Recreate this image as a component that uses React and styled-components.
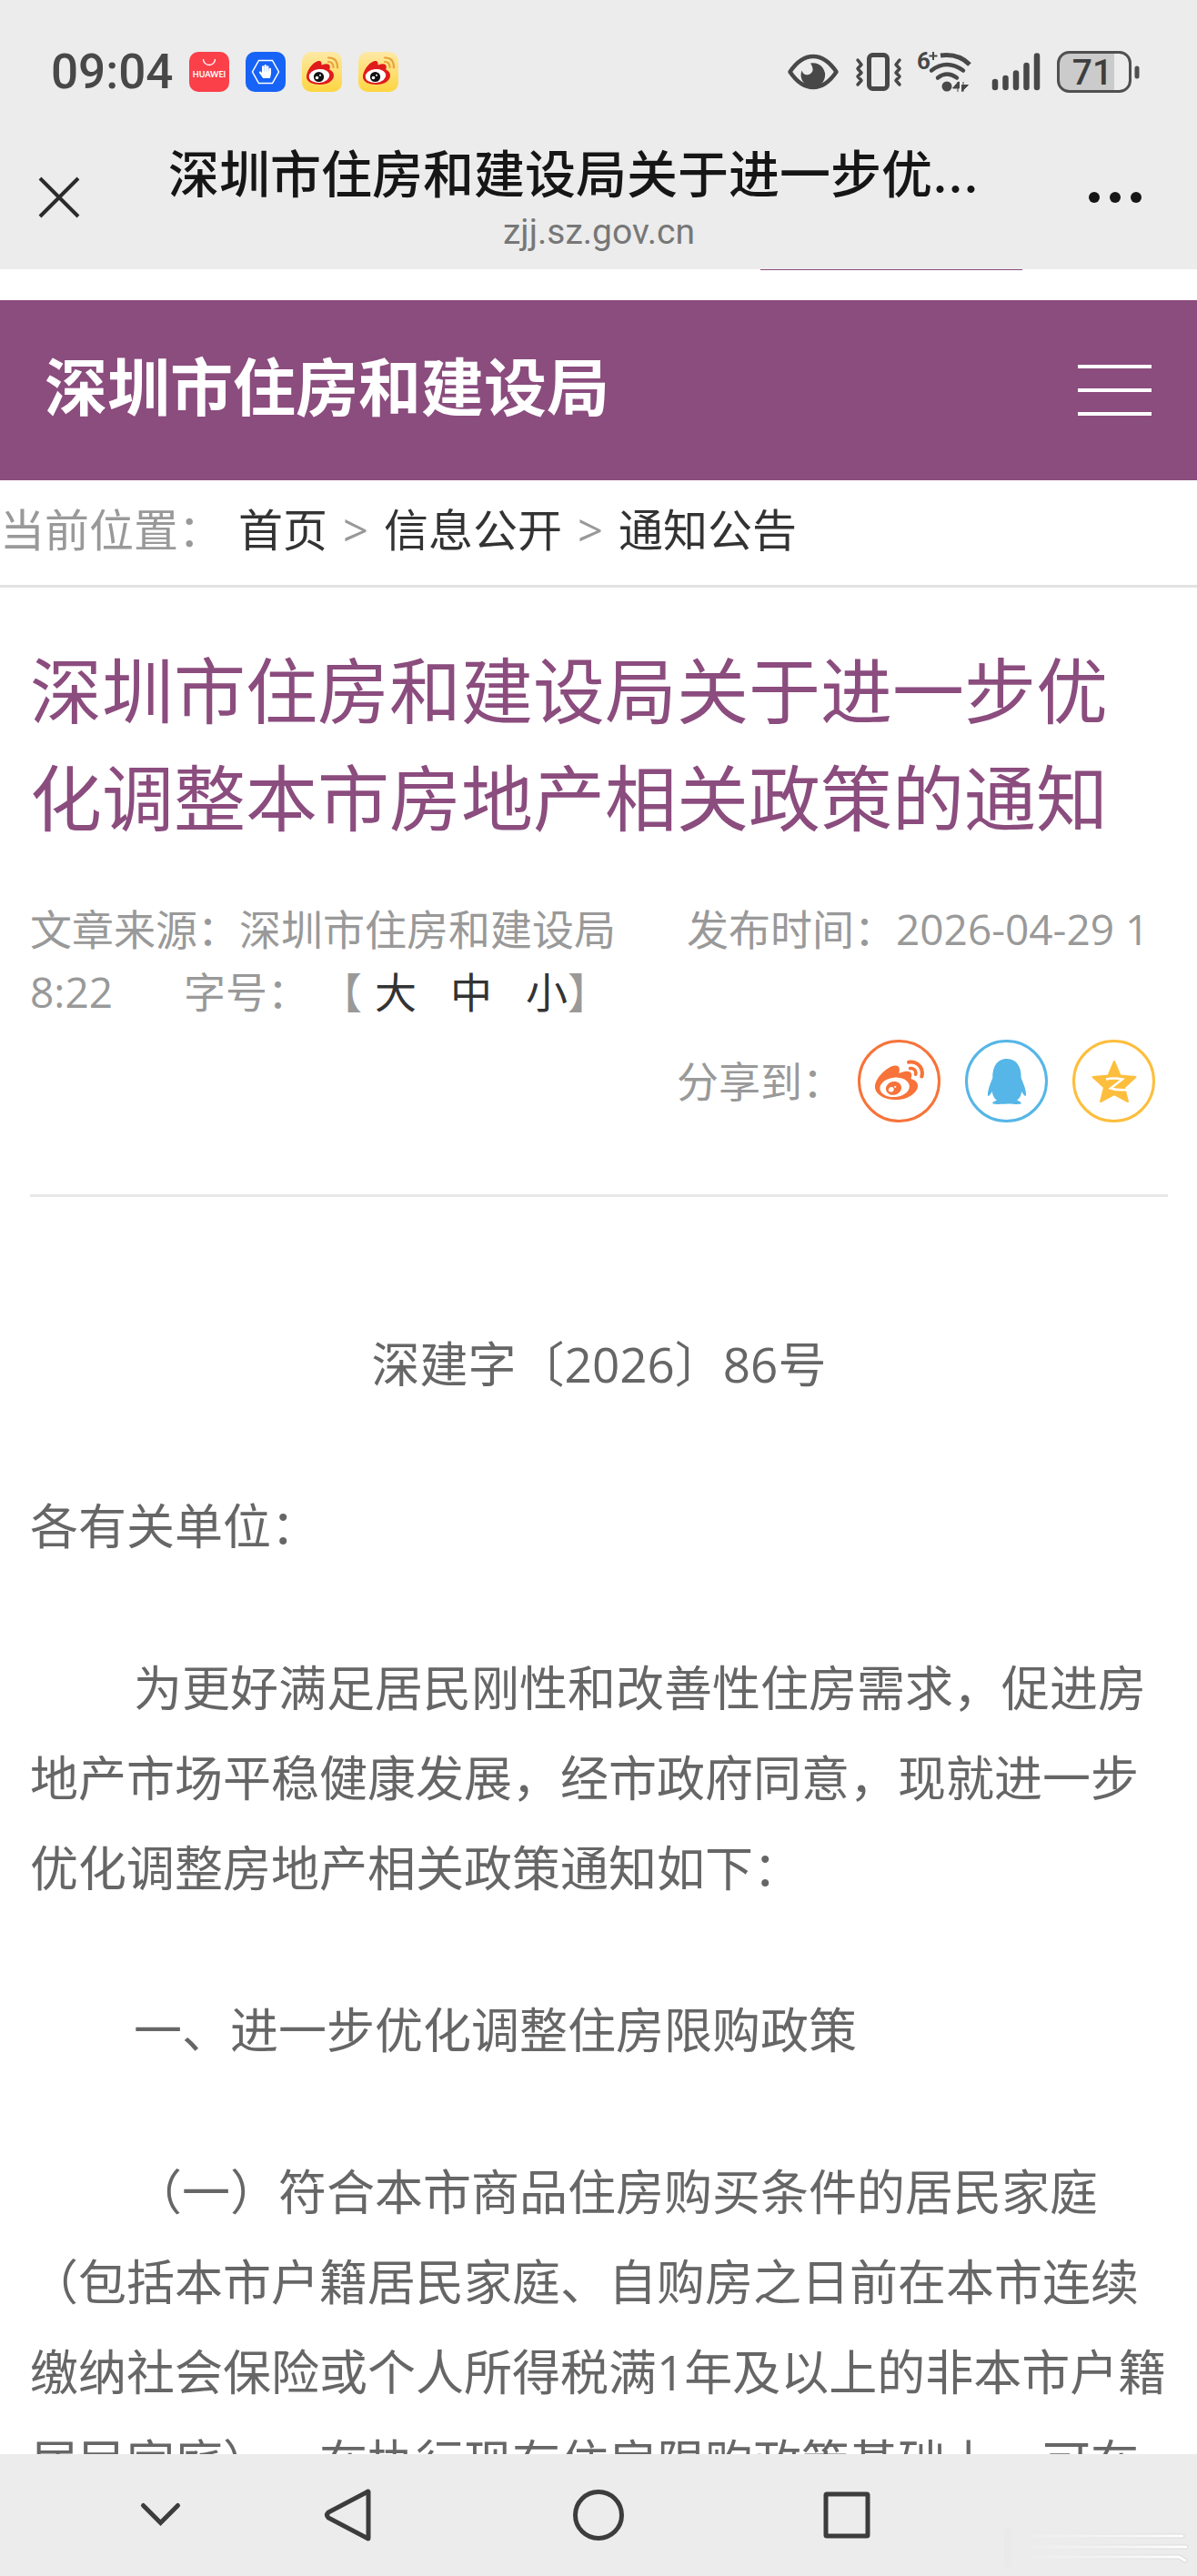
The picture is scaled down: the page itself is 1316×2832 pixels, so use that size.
import React from "react"
import styled, { createGlobalStyle } from "styled-components"
import { FaHandPaper, FaQq, FaWeibo } from "react-icons/fa"

const GlobalStyle = createGlobalStyle`
  * {
    box-sizing: border-box;
  }

  body {
    margin: 0;
    background-color: #ffffff;
    font-family: "Open Sans", "Noto Sans CJK SC", sans-serif;
    text-spacing-trim: space-all;
    text-autospace: no-autospace;
  }

  button {
    display: flex;
    align-items: center;
    justify-content: center;
    margin: 0;
    padding: 0;
    border: none;
    background: none;
    color: inherit;
    font: inherit;
    cursor: pointer;
  }

  a {
    color: inherit;
    text-decoration: none;
  }

  h1, h2, p {
    margin: 0;
  }

  svg {
    display: block;
    flex-shrink: 0;
    overflow: visible;
  }
`

const Screen = styled.div`
  display: flex;
  flex-direction: column;
  height: 100vh;
  overflow: hidden;
`

const TopBars = styled.header`
  flex-shrink: 0;
  background-color: #ececec;
`

const StatusBar = styled.div`
  display: flex;
  align-items: center;
  justify-content: space-between;
  height: 130px;
  padding: 28px 62px 0 56px;
  color: #484848;
`

const StatusGroup = styled.div`
  display: flex;
  align-items: center;
  gap: 18px;
`

const Clock = styled.time`
  font-family: Roboto, sans-serif;
  font-size: 53px;
  font-weight: 500;
  line-height: 56px;
`

const AppBar = styled.div`
  display: flex;
  align-items: center;
  justify-content: space-between;
  height: 166px;
  padding: 8px 60px 0 42px;
  color: #161616;
`

const PageInfo = styled.div`
  flex: 1;
  min-width: 0;
  padding: 8px 64px 0 97px;
`

const PageTitle = styled.p`
  font-family: Inter, "Noto Sans CJK SC", sans-serif;
  font-size: 56px;
  font-weight: 500;
  line-height: 68px;
  white-space: nowrap;
`

const PageHost = styled.p`
  font-family: Roboto, sans-serif;
  font-size: 39px;
  line-height: 58px;
  text-align: center;
  color: #777777;
`

const WebView = styled.main`
  flex: 1;
  min-height: 0;
  overflow: hidden;
`

const SearchEdge = styled.div`
  height: 34px;
  padding-left: 836px;

  &::before {
    content: "";
    display: block;
    width: 288px;
    height: 1px;
    background-color: #8b4c7e;
  }
`

const SiteHeader = styled.div`
  display: flex;
  align-items: center;
  justify-content: space-between;
  height: 198px;
  padding: 0 50px 0 49px;
  background-color: #8b4c7e;
  color: #ffffff;
`

const SiteName = styled.h2`
  padding-bottom: 8px;
  font-size: 69px;
  font-weight: 700;
  line-height: 80px;
`

const MenuButton = styled.button`
  && {
    flex-direction: column;
    gap: 22px;
    width: 81px;
  }

  span {
    width: 100%;
    height: 4px;
    background-color: #ffffff;
  }
`

const Breadcrumb = styled.nav`
  display: flex;
  align-items: center;
  gap: 17px;
  height: 118px;
  padding-bottom: 8px;
  border-bottom: 3px solid #e2e2e2;
  color: #999999;
  font-size: 49px;
  line-height: 60px;

  a {
    color: #333333;
  }
`

const Article = styled.article`
  padding: 55px 32px 0 33px;
`

const ArticleTitle = styled.h1`
  color: #8b4c7e;
  font-size: 79px;
  font-weight: 400;
  line-height: 118px;
`

const ArticleMeta = styled.div`
  margin-top: 50px;
  color: #999999;
  font-size: 46px;
  line-height: 69px;
  word-break: break-all;
`

const MetaItem = styled.span`
  margin-right: 78px;
`

const SizeButton = styled.button`
  && {
    display: inline;
    margin-left: ${({ $first }) => ($first ? "14px" : "37px")};
    color: #333333;
  }
`

const ShareRow = styled.div`
  display: flex;
  align-items: center;
  justify-content: flex-end;
  gap: 27px;
  margin-top: 18px;
  padding-right: 14px;
  padding-bottom: 79px;
  border-bottom: 3px solid #e8e8e8;
  color: #999999;
  font-size: 46px;
  line-height: 69px;

  > span {
    margin-right: -12px;
  }
`

const ShareButton = styled.button`
  && {
    width: 91px;
    height: 91px;
    border: 3px solid ${({ $color }) => $color};
    border-radius: 50%;
    color: ${({ $color }) => $color};
  }
`

const ArticleBody = styled.div`
  padding-top: 134px;
  color: #666666;
  font-size: 53px;
  line-height: 99px;
`

const Paragraph = styled.p`
  margin-bottom: 79px;
  text-align: ${({ $center }) => ($center ? "center" : "left")};
  text-indent: ${({ $indent }) => ($indent ? "114px" : "0")};
`

const SystemNav = styled.nav`
  position: relative;
  display: grid;
  grid-template-columns: 207fr 275fr 273fr 415fr;
  align-items: center;
  justify-items: start;
  flex-shrink: 0;
  height: 134px;
  padding-left: 146px;
  background-color: #ececec;
  color: #3c3c3c;
`

const Streaks = styled.svg`
  position: absolute;
  right: 8px;
  bottom: 8px;
`

function HuaweiIcon() {
  return (
    <svg width="44" height="44" viewBox="0 0 44 44">
      <rect width="44" height="44" rx="10" fill="#fb4049" />
      <path d="M15.500 8a6.500 6.500 0 0 0 13 0" fill="none" stroke="#fff" strokeWidth="1.300" />
      <text x="22" y="28" fill="#fff" fontFamily="Lato" fontSize="9" fontWeight="700" textAnchor="middle">
        HUAWEI
      </text>
    </svg>
  )
}

function HandIcon() {
  return (
    <svg width="44" height="44" viewBox="0 0 44 44">
      <rect width="44" height="44" rx="10" fill="#1763f6" />
      <path d="M14.500 9.500h15l7 12.500-7 12.500h-15L7.500 22z" fill="none" stroke="#fff" strokeWidth="1.500" />
      <FaHandPaper x="14" y="14" size={15} color="#fff" />
    </svg>
  )
}

function WeiboAppIcon({ id }) {
  return (
    <svg width="44" height="44" viewBox="0 0 44 44">
      <defs>
        <linearGradient id={id} x1="0" y1="0" x2="0" y2="1">
          <stop offset="0" stopColor="#fee9a6" />
          <stop offset="1" stopColor="#fed540" />
        </linearGradient>
      </defs>
      <rect width="44" height="44" rx="10" fill={`url(#${id})`} />
      <path
        d="M5 28C5 20 13 10 19 10q3 0 2.500 4.500Q29 12 30.500 15q.8 2-.3 4.500Q35 21.500 35 26c0 6-7 10-15 10S5 33 5 28z"
        fill="#e01b1c"
      />
      <ellipse cx="19" cy="26.500" rx="11.300" ry="7.500" fill="#fff" transform="rotate(-6 19 26.500)" />
      <circle cx="18.500" cy="27.500" r="5.600" fill="#111" />
      <circle cx="16.500" cy="28.500" r="1.800" fill="#fff" />
      <circle cx="20" cy="25.800" r="1" fill="#fff" />
      <path
        d="M29 6.500q10-.5 10 11M29 11q5.500 0 5.500 6"
        fill="none"
        stroke="#e7a336"
        strokeWidth="2.200"
        strokeLinecap="round"
      />
    </svg>
  )
}

function EyeIcon() {
  return (
    <svg width="56" height="40" viewBox="0 0 56 40">
      <path
        d="M2.500 20Q14 3 28 3t25.500 17Q42 37 28 37T2.500 20z"
        fill="none"
        stroke="currentColor"
        strokeWidth="4.500"
        strokeLinejoin="round"
      />
      <path d="M25 10.500a13.300 13.300 0 1 1-9.500 8q2 6 7.500 4.500 8-3 2-12.500z" fill="currentColor" />
    </svg>
  )
}

function VibrateIcon() {
  return (
    <svg width="52" height="44" viewBox="0 0 52 44" fill="none" stroke="currentColor">
      <rect x="15.500" y="3.500" width="20" height="37" rx="4" strokeWidth="5" />
      <path
        d="M3 9l4 5-4 4.500 4 4.500-4 4 4 4.500L3 36M49 9l-4 5 4 4.500-4 4.500 4 4-4 4.500 4 4.500"
        strokeWidth="3.500"
        strokeLinecap="round"
        strokeLinejoin="round"
      />
    </svg>
  )
}

function WifiIcon() {
  return (
    <svg width="62" height="46" viewBox="2 0 62 46" fill="none" stroke="currentColor">
      <text x="0" y="20" fill="currentColor" stroke="none" fontFamily="Roboto" fontSize="26" fontWeight="700">
        6
      </text>
      <path d="M13.500 5.500h9M18 1v9" strokeWidth="2" />
      <path d="M26 5q20-2.500 32 10" strokeWidth="5" />
      <path d="M16 21.500q17-13 35 0M23 29.500q10-8 21 0" strokeWidth="4.500" strokeLinecap="round" />
      <circle cx="33" cy="39" r="5.500" fill="currentColor" stroke="none" />
      <path d="M45 34v11M46.500 34h-1l-6 7h7zM51 34v11M49.500 44.500l7-7h-7z" fill="currentColor" strokeWidth="1" />
    </svg>
  )
}

function SignalIcon() {
  return (
    <svg width="54" height="44" viewBox="0 0 54 44" stroke="currentColor" strokeWidth="6.500" strokeLinecap="round">
      <path d="M4 33v6M15.500 29v10M27 23.500V39M38.500 15v24M50 4.500V39" />
    </svg>
  )
}

function BatteryIcon() {
  return (
    <svg width="92" height="46" viewBox="0 0 92 46">
      <path d="M13 2h50v42H13Q2 42 2 32V13Q3 3 13 2z" fill="#cbcbcb" />
      <rect x="1.500" y="1.500" width="79" height="43" rx="12" fill="none" stroke="#505050" strokeWidth="3" />
      <path d="M88 19v9" stroke="#505050" strokeWidth="5" strokeLinecap="round" />
      <text x="39" y="37" fill="#3e3e3e" fontFamily="Roboto" fontSize="39" fontWeight="500" textAnchor="middle">
        71
      </text>
    </svg>
  )
}

function CloseIcon() {
  return (
    <svg width="46" height="46" viewBox="0 0 46 46" fill="none" stroke="#2b2b2b" strokeWidth="4">
      <path d="M2 2l42 42M44 2 2 44" />
    </svg>
  )
}

function MoreIcon() {
  return (
    <svg width="60" height="14" viewBox="0 0 60 14" fill="currentColor">
      <circle cx="7" cy="7" r="6" />
      <circle cx="30" cy="7" r="6" />
      <circle cx="53" cy="7" r="6" />
    </svg>
  )
}

function QzoneIcon() {
  return (
    <svg width="50" height="48" viewBox="0 0 50 48">
      <path
        d="M25 2l6.500 15.500L48.500 19 36 30.500 40 46l-15-8-15 8 4-15.500L1.500 19l17-1.500z"
        fill="currentColor"
        stroke="currentColor"
        strokeWidth="2"
        strokeLinejoin="round"
      />
      <path d="M16 21.500q8-2 18 0L21 31.500q8 2.500 20.500 1.500" fill="none" stroke="#fff" strokeWidth="2.500" />
    </svg>
  )
}

// faint light trails in the corner of the system bar
function CornerStreaks() {
  return (
    <Streaks width="206" height="44" viewBox="0 0 206 44" fill="none" aria-hidden="true">
      <defs>
        <linearGradient id="streak" gradientUnits="userSpaceOnUse" x1="20" y1="0" x2="200" y2="0">
          <stop offset="0" stopColor="#ffffff" stopOpacity="0" />
          <stop offset="1" stopColor="#ffffff" />
        </linearGradient>
        <linearGradient id="streak-shade" gradientUnits="userSpaceOnUse" x1="60" y1="0" x2="200" y2="0">
          <stop offset="0" stopColor="#dedede" stopOpacity="0" />
          <stop offset="1" stopColor="#dadada" />
        </linearGradient>
      </defs>
      <path d="M2 0h8v42H2z" fill="#eaeaea" />
      <path d="M20 8h178M20 20h182M20 31h174l7 4" stroke="url(#streak-shade)" strokeWidth="5" strokeLinecap="round" />
      <path d="M20 8h178M20 20h182M20 31h174l7 4" stroke="url(#streak)" strokeWidth="3" strokeLinecap="round" />
    </Streaks>
  )
}

const navIcons = [
  { label: "收起", path: "M11.500 19.500l19 19 19-19" },
  { label: "返回", path: "M52 5v50q0 2-2 0L8 33q-3-3 0-6L50 5q2-2 2 0z" },
  { label: "主页", path: "M30 4.500a25.500 25.500 0 1 1 0 51a25.500 25.500 0 1 1 0-51z" },
  { label: "最近任务", path: "M8 7h44q1 0 1 1v44q0 1-1 1H8q-1 0-1-1V8q0-1 1-1z" },
]

const paragraphs = [
  { text: "深建字〔2026〕86号", center: true },
  { text: "各有关单位：" },
  {
    text: "为更好满足居民刚性和改善性住房需求，促进房地产市场平稳健康发展，经市政府同意，现就进一步优化调整房地产相关政策通知如下：",
    indent: true,
  },
  { text: "一、进一步优化调整住房限购政策", indent: true },
  {
    text: "（一）符合本市商品住房购买条件的居民家庭（包括本市户籍居民家庭、自购房之日前在本市连续缴纳社会保险或个人所得税满1年及以上的非本市户籍居民家庭），在执行现有住房限购政策基础上，可在",
    indent: true,
  },
]

export default function App() {
  return (
    <Screen>
      <GlobalStyle />
      <TopBars>
        <StatusBar>
          <StatusGroup>
            <Clock>09:04</Clock>
            <HuaweiIcon />
            <HandIcon />
            <WeiboAppIcon id="weibo-a" />
            <WeiboAppIcon id="weibo-b" />
          </StatusGroup>
          <StatusGroup>
            <EyeIcon />
            <VibrateIcon />
            <WifiIcon />
            <SignalIcon />
            <BatteryIcon />
          </StatusGroup>
        </StatusBar>
        <AppBar>
          <button aria-label="关闭">
            <CloseIcon />
          </button>
          <PageInfo>
            <PageTitle>深圳市住房和建设局关于进一步优…</PageTitle>
            <PageHost>zjj.sz.gov.cn</PageHost>
          </PageInfo>
          <button aria-label="更多">
            <MoreIcon />
          </button>
        </AppBar>
      </TopBars>

      <WebView>
        <SearchEdge />
        <SiteHeader>
          <SiteName>深圳市住房和建设局</SiteName>
          <MenuButton aria-label="菜单">
            <span />
            <span />
            <span />
          </MenuButton>
        </SiteHeader>
        <Breadcrumb>
          <span>当前位置：</span>
          <a href="#home">首页</a>
          <span>&gt;</span>
          <a href="#info">信息公开</a>
          <span>&gt;</span>
          <a href="#notice">通知公告</a>
        </Breadcrumb>

        <Article>
          <ArticleTitle>深圳市住房和建设局关于进一步优化调整本市房地产相关政策的通知</ArticleTitle>
          <ArticleMeta>
            <MetaItem>文章来源：深圳市住房和建设局</MetaItem>
            <MetaItem>发布时间：2026-04-29 18:22</MetaItem>
            <span>字号： 【</span>
            <SizeButton $first>大</SizeButton>
            <SizeButton>中</SizeButton>
            <SizeButton>小</SizeButton>
            <span>】</span>
          </ArticleMeta>
          <ShareRow>
            <span>分享到：</span>
            <ShareButton $color="#f77339" aria-label="分享到微博">
              <FaWeibo size={54} />
            </ShareButton>
            <ShareButton $color="#56b6e7" aria-label="分享到QQ">
              <FaQq size={50} />
            </ShareButton>
            <ShareButton $color="#fdbe3d" aria-label="分享到QQ空间">
              <QzoneIcon />
            </ShareButton>
          </ShareRow>
          <ArticleBody>
            {paragraphs.map(({ text, center, indent }) => (
              <Paragraph key={text} $center={center} $indent={indent}>
                {text}
              </Paragraph>
            ))}
          </ArticleBody>
        </Article>
      </WebView>

      <SystemNav>
        {navIcons.map(({ label, path }) => (
          <button key={label} aria-label={label}>
            <svg width="60" height="60" viewBox="0 0 60 60" fill="none" stroke="currentColor" strokeWidth="5" strokeLinecap="round">
              <path d={path} />
            </svg>
          </button>
        ))}
        <CornerStreaks />
      </SystemNav>
    </Screen>
  )
}
